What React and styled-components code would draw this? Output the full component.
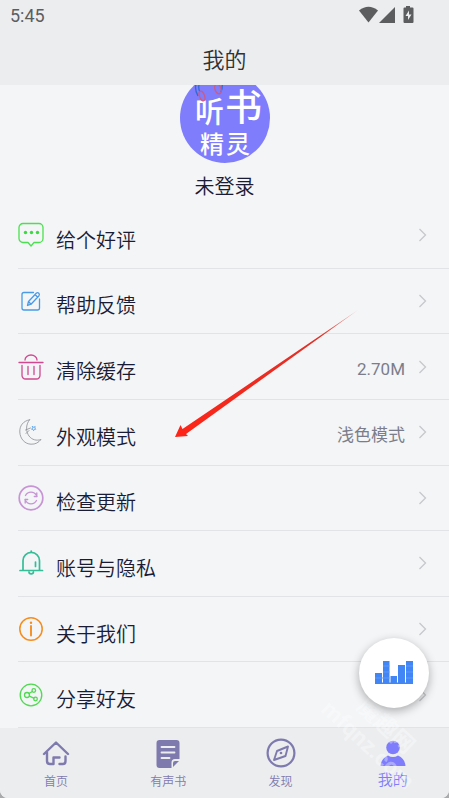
import React from "react";
import styled, { createGlobalStyle } from "styled-components";

const rows = [
  { label: "给个好评", icon: "chat" },
  { label: "帮助反馈", icon: "edit" },
  { label: "清除缓存", icon: "trash", value: "2.70M" },
  { label: "外观模式", icon: "moon", value: "浅色模式" },
  { label: "检查更新", icon: "refresh" },
  { label: "账号与隐私", icon: "bell" },
  { label: "关于我们", icon: "info" },
  { label: "分享好友", icon: "share" },
];

const tabs = [
  { label: "首页", icon: "home" },
  { label: "有声书", icon: "book" },
  { label: "发现", icon: "compass" },
  { label: "我的", icon: "user", active: true },
];

const rowIcons = {
  chat: (
    <g stroke="#4be04f">
      <path d="M5 1.5h16a4 4 0 0 1 4 4v11a4 4 0 0 1-4 4h-5l-3 3.5-3-3.5H5a4 4 0 0 1-4-4v-11a4 4 0 0 1 4-4z" />
      <g fill="#3fd845" stroke="none">
        <circle cx="7.5" cy="10.5" r="1.7" />
        <circle cx="13.5" cy="10.5" r="1.7" />
        <circle cx="19.5" cy="10.5" r="1.7" />
      </g>
    </g>
  ),
  edit: (
    <g stroke="#4a9ae6">
      <path d="M15.5 4.500H6a2 2 0 0 0-2 2V20a2 2 0 0 0 2 2h13.500a2 2 0 0 0 2-2v-9" />
      <path d="M9.500 17.500l1-4L18.500 5q1.200-.8 2.300.3t.2 2.400L13 16.200zM17 6.500l2.500 2.500M10.500 13.500l2.500 2.700" />
    </g>
  ),
  trash: (
    <g stroke="#d0488f">
      <path d="M1 8.500h24M7 6a6 5 0 0 1 12 0M4 11.500v10a3.500 3.500 0 0 0 3.500 3.500h11a3.500 3.500 0 0 0 3.500-3.500v-10M10 12.500v8M16 12.500v8" />
    </g>
  ),
  moon: (
    <g stroke="#8b8d93" strokeWidth="0.8">
      <path d="M11.500 .8C5 2 1.500 7 1.800 13c.3 7 5.200 12 11.200 12.200 4.500.2 7.500-1.700 10-4.700-4.500 1.500-9 .4-12-3.500C7.800 12.500 7.500 6 11.500 .8z" />
      <path d="M7.500 11l5-2M8 14.500l3-3" />
      <path stroke="#4a9be8" d="M14.500 7.500l1.300.8 1.400-.8-.4 1.600 1 1.100-1.500.2-.7 1.300-.6-1.300-1.500-.3 1.200-1z" />
    </g>
  ),
  refresh: (
    <g stroke="#c794d4">
      <circle cx="13" cy="13" r="11.800" strokeWidth="1.700" />
      <path d="M7.500 10.500a6.200 6.200 0 0 1 11 0M18.500 15.500a6.200 6.200 0 0 1-11 0M18.800 8v3.500M7.200 18v-3.500" />
      <path d="M18.800 11.500h-2.500M7.200 14.500h2.500" />
    </g>
  ),
  bell: (
    <g stroke="#35bd97" strokeWidth="1.700">
      <path d="M5 20.500V10.500a8.200 8 0 0 1 16.500 0v10M2 20.500h22.500M13.200 1v1.500M11 22a2.200 1.800 0 0 0 4.400 0M17.500 12v4.500" />
    </g>
  ),
  info: (
    <g stroke="#f58d20" strokeWidth="1.500">
      <circle cx="13" cy="13" r="11.200" />
      <path d="M13 10v9.500" strokeWidth="1.900" />
      <circle cx="13" cy="6.800" r="1.200" fill="#f58d20" stroke="none" />
    </g>
  ),
  share: (
    <g stroke="#51d951">
      <circle cx="13" cy="13" r="10.800" />
      <circle cx="9" cy="13" r="2.500" />
      <circle cx="15.800" cy="8.500" r="1.800" />
      <circle cx="17.500" cy="17" r="1.800" />
      <path d="M11 11.500l3.300-2M11.300 14.200l4.500 2" />
    </g>
  ),
};

const tabIcons = {
  home: (
    <path
      d="M4 17L16 5.500 28 17M7 15.500V24q0 3 3 3h3.500v-6.500h6M19.500 27H23q2.500 0 2.500-3v-4.500"
      fill="none"
      stroke="#7f7aae"
      strokeWidth="2.400"
      strokeLinejoin="round"
      strokeLinecap="round"
    />
  ),
  book: (
    <g>
      <path fill="#7f7aae" d="M7.500 3h17a3 3 0 0 1 3 3v16h-4.500a3.500 3.500 0 0 0-3.500 3.500V31h-12a3 3 0 0 1-3-3V6a3 3 0 0 1 3-3z" />
      <path fill="#7f7aae" d="M27 24L21 30V26q0-2 2-2z" />
      <path d="M9.500 10h13M9.500 15.500h13M9.500 21h8" stroke="#ecedef" strokeWidth="1.800" strokeLinecap="round" />
    </g>
  ),
  compass: (
    <g fill="none" stroke="#7f7aae">
      <circle cx="16" cy="16" r="13.400" strokeWidth="2.200" />
      <path d="M23 9.500l-2.500 9.500-11.500 4 3-9z" strokeWidth="1.900" strokeLinejoin="round" />
      <circle cx="16" cy="16" r="1.300" fill="#7f7aae" stroke="none" />
    </g>
  ),
  user: (
    <g fill="#7f7dfc">
      <circle cx="16" cy="10.500" r="6.800" />
      <path d="M3.500 29q.5-7.500 7.500-10.500 5 3 10 0 7 3 7.500 10.500z" />
    </g>
  ),
};

const App = () => {
  return (
    <>
      <GlobalStyle />
      <Screen>
        <Header>
          <StatusBar>
            <span>5:45</span>
            <StatusIcons viewBox="0 0 56 18" aria-hidden="true">
              <path d="M0 4.500Q9.500-3 19 4.500L9.500 16.500z" />
              <path d="M36 1v16H20z" />
              <path d="M47 0h4v1.500h2.500q1 0 1 1V16q0 1-1 1h-8q-1 0-1-1V2.500q0-1 1-1H47z" />
              <path d="M50 4.500L46.500 10h2.500v4l3.500-5.500H50z" fill="#ecedef" />
            </StatusIcons>
          </StatusBar>
          <Title>我的</Title>
        </Header>

        <Profile>
          <Avatar viewBox="0 0 90 90" role="img" aria-label="听书精灵">
            <circle cx="45" cy="45" r="45" fill="#7f7dfc" />
            <LogoText x="15" y="50" $size={29}>听</LogoText>
            <LogoText x="45" y="48" $size={37}>书</LogoText>
            <LogoText x="20" y="80" $size={24}>精</LogoText>
            <LogoText x="46" y="80" $size={24}>灵</LogoText>
            <g fill="none" strokeWidth="1.300">
              <path d="M18 7q-5 7 0 16M21 7q-4 7-1 12M42 8q1 6-1 11" stroke="#2f69d8" />
              <ellipse cx="22" cy="23" rx="2.500" ry="5" transform="rotate(-20 22 23)" stroke="#cf5a80" />
              <ellipse cx="38" cy="16" rx="3" ry="5" transform="rotate(-20 38 16)" stroke="#cf5a80" />
            </g>
          </Avatar>
          <UserName>未登录</UserName>
        </Profile>

        <Menu>
          {rows.map((row) => (
            <MenuItem key={row.label}>
              <RowIcon viewBox="0 0 26 26">{rowIcons[row.icon]}</RowIcon>
              <RowButton>
                <RowLabel>{row.label}</RowLabel>
                {row.value && <RowValue>{row.value}</RowValue>}
                <Chevron viewBox="0 0 8 14">
                  <path d="M1 1l6 6-6 6" />
                </Chevron>
              </RowButton>
            </MenuItem>
          ))}
        </Menu>

        <TabBar>
          {tabs.map((tab) => (
            <Tab key={tab.label} $active={tab.active}>
              <TabIcon viewBox="0 0 32 32">{tabIcons[tab.icon]}</TabIcon>
              {tab.label}
            </Tab>
          ))}
        </TabBar>

        <Pointer viewBox="0 0 184 130" aria-hidden="true">
          <defs>
            <linearGradient id="fade" x1="1" y1="0" x2="0" y2="1">
              <stop offset="0" stopColor="#e8382c" stopOpacity="0.4" />
              <stop offset="0.2" stopColor="#df3128" />
              <stop offset="1" stopColor="#ff2417" />
            </linearGradient>
          </defs>
          <path fill="url(#fade)" d="M183 0L7.500 119 5.500 115 0 127 13 126 11 124z" />
        </Pointer>

        <Watermark>
          <span>魔趣网</span>
          <span>mfqnz.com</span>
        </Watermark>

        <PlayButton aria-label="正在播放">
          <Bars viewBox="0 0 38 24">
            <path d="M0 12h7v11H0zM8 0h6.500v23H8zM15.500 15h6.500v8h-6.500zM23 4h7v19h-7zM31 0h7v23h-7z" />
            <path d="M0 21.500h38v1.500H0z" />
            <path d="M0 17h14.500M8 11h6.500M8 5h6.500M31 11h7M31 5h7M31 17h7" stroke="#5f99fa" />
          </Bars>
        </PlayButton>
      </Screen>
    </>
  );
};

const GlobalStyle = createGlobalStyle`
  * {
    box-sizing: border-box;
  }

  body {
    margin: 0;
    background-color: #a9aaab;
    color: #1a1c35;
    font-family: Roboto, "Noto Sans CJK SC", sans-serif;
  }

  button {
    padding: 0;
    border: none;
    background: none;
    color: inherit;
    font-family: inherit;
  }
`;

const Screen = styled.div`
  position: relative;
  display: flex;
  flex-direction: column;
  min-height: 100vh;
  overflow: hidden;
  background-color: #f3f5f7;
  border-radius: 0 0 8px 8px;
`;

const Header = styled.header`
  background-color: #ecedef;
`;

const StatusBar = styled.div`
  display: flex;
  justify-content: space-between;
  align-items: center;
  height: 30px;
  padding: 0 34px 0 10px;
  color: #5c5d5f;
  font-size: 18px;
`;

const StatusIcons = styled.svg`
  width: 56px;
  height: 18px;
  fill: #5c5d5f;
`;

const Title = styled.h1`
  margin: 0;
  padding-top: 13px;
  height: 55px;
  color: #303133;
  font-size: 22px;
  font-weight: 350;
  line-height: 36px;
  text-align: center;
`;

const Profile = styled.section`
  display: flex;
  flex-direction: column;
  align-items: center;
  overflow: hidden;
`;

const Avatar = styled.svg`
  width: 90px;
  height: 90px;
  margin-top: -12px;
`;

const LogoText = styled.text`
  fill: #ffffff;
  font-family: "Noto Sans CJK SC", sans-serif;
  font-size: ${(props) => props.$size}px;
  font-weight: 500;
`;

const UserName = styled.div`
  padding: 12px 0 4px;
  font-size: 20px;
  font-weight: 350;
  line-height: 24px;
`;

const Menu = styled.ul`
  display: flex;
  flex: 1;
  flex-direction: column;
  margin: 0;
  padding: 0 0 0 18px;
  list-style: none;
`;

const MenuItem = styled.li`
  display: flex;
  flex: 1;
  align-items: center;
  gap: 12px;
  min-height: 56px;
  border-bottom: 1px solid #e1e3e6;
`;

const RowIcon = styled.svg`
  width: 26px;
  height: 26px;
  fill: none;
  stroke-width: 1.3;
  stroke-linecap: round;
  stroke-linejoin: round;
`;

const RowButton = styled.button`
  display: flex;
  flex: 1;
  align-items: center;
  align-self: stretch;
  padding-right: 22px;
  text-align: left;
`;

const RowLabel = styled.span`
  flex: 1;
  padding-top: 11px;
  font-size: 20px;
  font-weight: 350;
  line-height: 28px;
`;

const RowValue = styled.span`
  padding: 5px 13px 0 0;
  color: #7c7d8a;
  font-size: 17px;
  line-height: 28px;
`;

const Chevron = styled.svg`
  width: 9px;
  height: 14px;
  fill: none;
  stroke: #c6c8cc;
  stroke-width: 1.3;
`;

const TabBar = styled.nav`
  display: grid;
  grid-template-columns: repeat(4, 1fr);
  height: 70px;
  background-color: #ecedef;
`;

const Tab = styled.button`
  display: flex;
  flex-direction: column;
  align-items: center;
  padding-top: 9px;
  gap: ${(props) => (props.$active ? 1 : 3)}px;
  color: ${(props) => (props.$active ? "#7f7dfc" : "#7f7aae")};
  font-size: ${(props) => (props.$active ? 15 : 12)}px;
  font-weight: 350;
  line-height: 20px;
`;

const TabIcon = styled.svg`
  width: 32px;
  height: 32px;
`;

const Pointer = styled.svg`
  position: absolute;
  top: 310px;
  left: 175px;
  width: 184px;
  height: 130px;
  pointer-events: none;
`;

const Watermark = styled.div`
  position: absolute;
  right: 14px;
  bottom: 36px;
  display: flex;
  flex-direction: column;
  align-items: center;
  color: rgba(255, 255, 255, 0.35);
  font-size: 23px;
  font-weight: 700;
  line-height: 26px;
  transform: rotate(43deg);
  pointer-events: none;
`;

const PlayButton = styled.button`
  && {
    position: absolute;
    right: 20px;
    bottom: 90px;
    display: flex;
    justify-content: center;
    align-items: center;
    width: 70px;
    height: 70px;
    border-radius: 50%;
    background-color: #ffffff;
    box-shadow: 0 3px 10px rgba(0, 0, 0, 0.3);
  }
`;

const Bars = styled.svg`
  width: 38px;
  height: 24px;
  fill: #4285f4;
`;

export default App;
